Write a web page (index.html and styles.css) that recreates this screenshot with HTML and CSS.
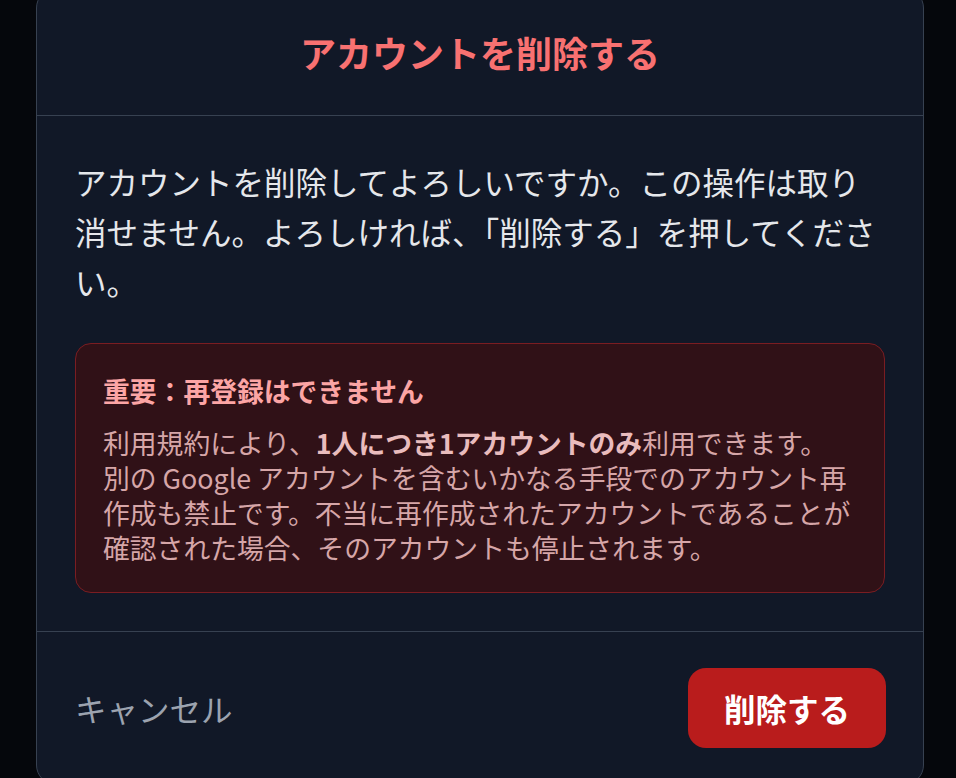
FILE: index.html
```html
<!DOCTYPE html>
<html lang="ja">
<head>
<meta charset="utf-8">
<title>アカウントを削除する</title>
<link rel="stylesheet" href="styles.css">
</head>
<body>
<div class="backdrop">
  <div class="dialog" role="dialog">
    <header class="dialog-header">
      <h2 class="dialog-title">アカウントを削除する</h2>
    </header>
    <div class="dialog-body">
      <p class="lead">アカウントを削除してよろしいですか。この操作は取り消せません。よろしければ、「削除する」を押してください。</p>
      <div class="warning">
        <p class="warning-title">重要：再登録はできません</p>
        <div class="warning-text">
          <p>利用規約により、<strong>1人につき1アカウントのみ</strong>利用できます。</p>
          <p>別の Google アカウントを含むいかなる手段でのアカウント再作成も禁止です。不当に再作成されたアカウントであることが確認された場合、そのアカウントも停止されます。</p>
        </div>
      </div>
    </div>
    <footer class="dialog-footer">
      <button class="btn-cancel" type="button">キャンセル</button>
      <button class="btn-danger" type="button">削除する</button>
    </footer>
  </div>
</div>
</body>
</html>
```
FILE: styles.css
```css
html, body {
  margin: 0;
  height: 100%;
  overflow: hidden;
  background: #05070c;
}
body {
  font-family: "Noto Sans CJK JP", "Noto Sans", sans-serif;
}
.backdrop {
  height: 100%;
  padding-left: 36px;
}
.dialog {
  width: 888px;
  box-sizing: border-box;
  margin-top: -12px;
  background: #111827;
  border: 1px solid #374151;
  border-radius: 20px;
}
.dialog-header {
  padding: 37px 38px;
  border-bottom: 1px solid #374151;
  text-align: center;
}
.dialog-title {
  margin: 0;
  font-size: 36px;
  line-height: 52px;
  font-weight: 700;
  color: #f87171;
}
.dialog-body {
  padding: 40px 38px 38px;
}
.lead {
  margin: 0 0 37px;
  font-size: 31.5px;
  line-height: 50px;
  color: #e5e7eb;
}
.warning {
  border: 1px solid #7a1d22;
  background: #301117;
  border-radius: 16px;
  padding: 27px;
}
.warning-title {
  margin: 0 0 14px;
  font-size: 26.8px;
  line-height: 40px;
  font-weight: 700;
  color: #fca5a5;
}
.warning-text p {
  margin: 0;
  font-size: 26.8px;
  line-height: 35px;
  color: #d6a6a8;
}
.warning-text strong {
  font-weight: 700;
  color: #e9bcbd;
}
.dialog-footer {
  display: flex;
  justify-content: space-between;
  align-items: center;
  padding: 36px 37px 36px 38px;
  border-top: 1px solid #374151;
}
.btn-cancel {
  padding: 0;
  border: 0;
  background: none;
  font-family: inherit;
  font-size: 31.5px;
  line-height: 46px;
  color: #9ca3af;
}
.btn-danger {
  padding: 17px 36px;
  border: 0;
  border-radius: 18px;
  background: #b91c1c;
  font-family: inherit;
  font-size: 31.5px;
  line-height: 46px;
  font-weight: 700;
  color: #ffffff;
}
```
